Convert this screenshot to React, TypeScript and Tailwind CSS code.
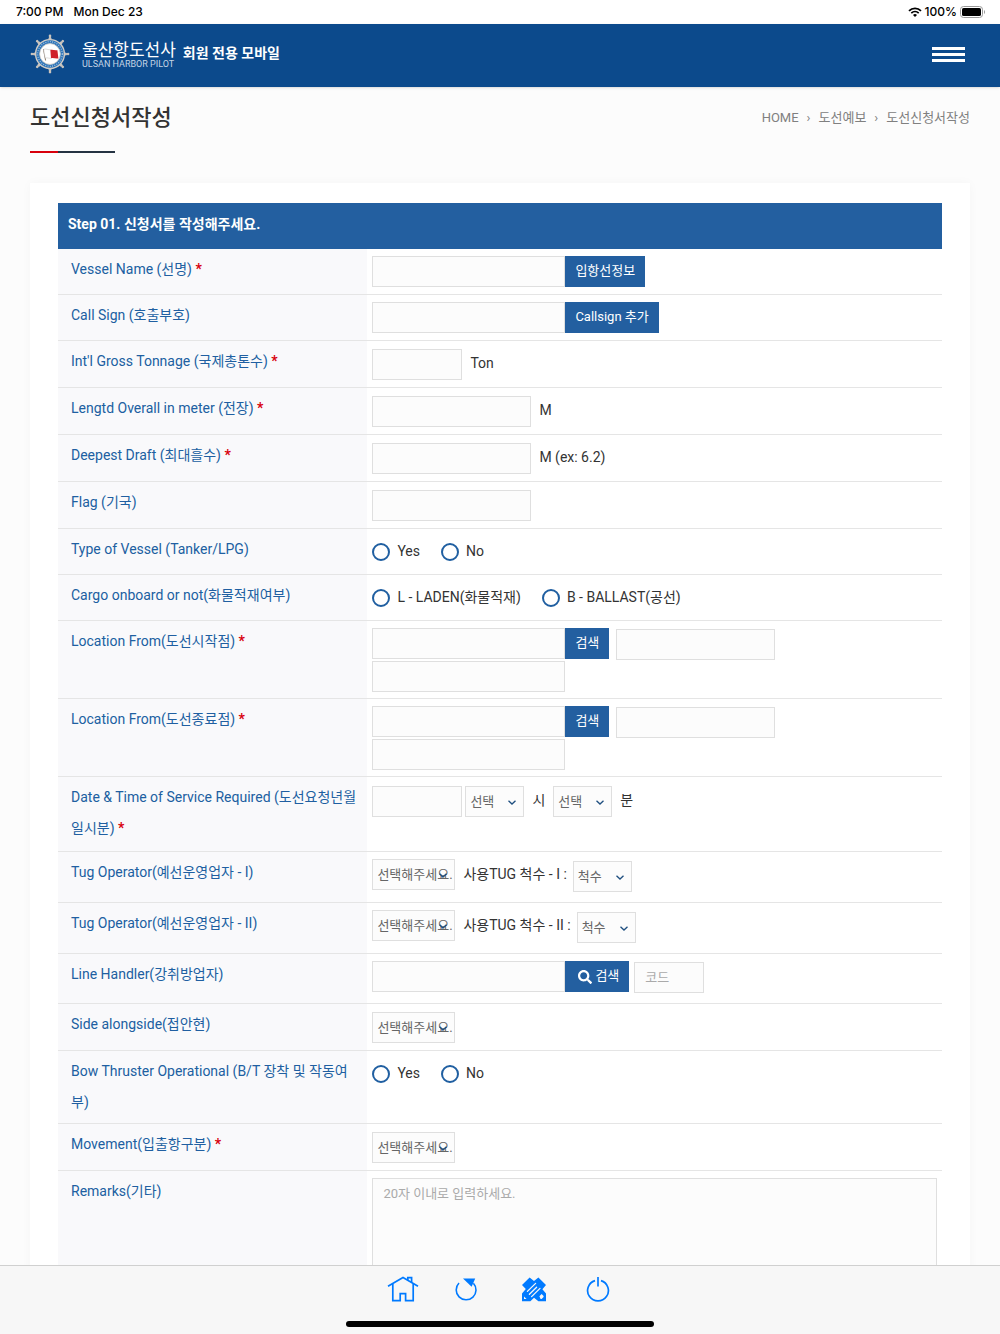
import React from "react"
import { FaSearch } from "react-icons/fa"

const inputStyle =
  "h-[31px] rounded-none border border-[#dfdfdf] bg-[#fcfcfc] px-2.5 text-[13px] text-[#333] placeholder:text-[#aaa] focus:outline-none"

const Row = ({
  label,
  id,
  required,
  children,
}: {
  label: string
  id: string
  required?: boolean
  children: React.ReactNode
}) => (
  <div className="grid grid-cols-[35%_1fr] border-b border-[#e5e5e5]">
    <div className="bg-[#f9f9fb] py-[5px] pl-[13px] pr-2 leading-[31px] text-[#205fa1]">
      <label htmlFor={id}>{label}</label>
      {required && <span className="font-bold text-[#d8000c]"> *</span>}
    </div>
    <div className="px-[5px]">{children}</div>
  </div>
)

const Field = ({
  id,
  label,
  width,
  placeholder,
}: {
  id: string
  label?: string
  width: string
  placeholder?: string
}) => (
  <input
    id={id}
    type="text"
    aria-label={label}
    placeholder={placeholder}
    className={`${inputStyle} ${width}`}
  />
)

const Select = ({
  id,
  label,
  text,
  width,
}: {
  id: string
  label?: string
  text: string
  width: string
}) => (
  <span className={`relative block h-[31px] shrink-0 ${width}`}>
    <select
      id={id}
      aria-label={label}
      className="block h-full w-full appearance-none rounded-none border border-[#dfdfdf] bg-[#fcfcfc] pt-[2px] pl-1 text-[13px] text-[#666]"
    >
      <option>{text}</option>
    </select>
    <svg
      viewBox="0 0 8 5"
      className="pointer-events-none absolute top-[14px] right-2 h-[5px] w-2"
      fill="none"
      stroke="#205080"
      strokeWidth="1.3"
    >
      <path d="M0.5 0.7 4 4 7.5 0.7" />
    </svg>
  </span>
)

const Radio = ({ name, id, text }: { name: string; id: string; text: string }) => (
  <label className="flex items-center gap-[7px] leading-[31px]">
    <input
      id={id}
      type="radio"
      name={name}
      className="size-[18px] appearance-none rounded-full border-2 border-[#205fa1] bg-white checked:border-[6px]"
    />
    {text}
  </label>
)

const Button = ({ children }: { children: React.ReactNode }) => (
  <button
    type="button"
    className="flex h-[31px] shrink-0 items-center gap-[3px] bg-[#235fa0] px-2.5 text-[13px] text-white"
  >
    {children}
  </button>
)

const Location = ({ id }: { id: string }) => (
  <div className="pt-[7px] pb-1.5">
    <div className="flex items-start">
      <Field id={id} width="w-[193px]" />
      <Button>검색</Button>
      <span className="mt-px ml-[7px] flex">
        <Field id={`${id}-name`} label="Location name" width="w-[159px]" />
      </span>
    </div>
    <div className="mt-px flex">
      <Field id={`${id}-detail`} label="Location detail" width="w-[193px]" />
    </div>
  </div>
)

const Tug = ({ id, text }: { id: string; text: string }) => (
  <div className="flex items-start pt-[7px] pb-2.5">
    <Select id={id} text="선택해주세요." width="w-[83px]" />
    <label htmlFor={`${id}-count`} className="mr-1.5 ml-2 leading-[31px]">
      {text}
    </label>
    <span className="mt-[2px]">
      <Select id={`${id}-count`} text="척수" width="w-[59px]" />
    </span>
  </div>
)

const spokes = [0, 45, 90, 135, 180, 225, 270, 315]

const Logo = () => (
  <svg viewBox="0 0 40 40" className="size-10" aria-hidden="true">
    {spokes.map((angle) => (
      <g key={angle} transform={`rotate(${angle} 20 20)`} fill="#c9c4be">
        <path d="M19.1 7V2.5h1.8V7z" />
        <circle cx="20" cy="1.9" r="1.3" />
        <circle cx="20" cy="4.6" r="1.5" />
      </g>
    ))}
    <circle cx="20" cy="20" r="14.4" fill="#2d74b8" stroke="#d0cbc5" strokeWidth="1.4" />
    <circle
      cx="20"
      cy="20"
      r="12.3"
      fill="none"
      stroke="#a9c6e2"
      strokeWidth="1.2"
      strokeDasharray="1 1.3"
    />
    <circle cx="20" cy="20" r="10.4" fill="#fff" stroke="#d0cbc5" strokeWidth="0.8" />
    <path d="M13.4 15 15.6 26.5" stroke="#8a7b6c" strokeWidth="1" />
    <path
      d="M13.6 15.4c2.5-1.3 4.5.9 7.4.3l.6 8.4c-2.4.8-4-.9-6.4 0z"
      fill="#fff"
      stroke="#bcb8b5"
      strokeWidth="0.5"
    />
    <path d="M20.4 16c2.4-.7 4.2.8 7 .2l1 8.2c-2.6.8-5-.9-7.4-.2z" fill="#cf2029" />
  </svg>
)

const StatusBar = () => (
  <div className="flex h-6 shrink-0 items-center justify-between bg-white pr-3.5 pl-4 font-['Inter',sans-serif] text-xs font-medium text-black">
    <div className="flex gap-2.5">
      <span>7:00 PM</span>
      <span>Mon Dec 23</span>
    </div>
    <div className="flex items-center gap-[3px]">
      <svg viewBox="0 0 14 10" className="h-2.5 w-3.5" fill="none" stroke="#000">
        <path d="M1 3.8a8.6 8.6 0 0 1 12 0" strokeWidth="1.8" />
        <path d="M3.3 6.1a5.4 5.4 0 0 1 7.4 0" strokeWidth="1.7" />
        <path d="M7 10 5 7.9a3 3 0 0 1 4 0z" fill="#000" stroke="none" />
      </svg>
      <span>100%</span>
      <svg viewBox="0 0 26 12" className="h-3 w-[26px]">
        <rect x="0.5" y="0.5" width="22" height="11" rx="3" fill="none" stroke="#999" />
        <rect x="2" y="2" width="19" height="8" rx="1.6" />
        <path d="M24 4v4c1.4-.6 1.4-3.4 0-4z" fill="#999" />
      </svg>
    </div>
  </div>
)

const BottomBar = () => (
  <nav className="flex h-[69px] shrink-0 flex-col items-center justify-between border-t border-[#d0d0d0] bg-[#f7f7f7] pt-2.5 pb-[7px] text-[#007aff]">
    <div className="flex h-7 items-center pr-[3px]">
      <button type="button" aria-label="Home" className="mr-[35px]">
        <svg viewBox="0 0 32 28" className="h-7 w-8" fill="none" stroke="currentColor" strokeWidth="1.7">
          <path d="M1 10.2 16 1.6l15 8.6" />
          <path d="M5.8 8v16.6h7.4v-7h5.4v7h7.6V8" />
          <path d="M20.8 4V1.6h3.8v4.6" />
        </svg>
      </button>
      <button type="button" aria-label="Reload" className="mr-[43px]">
        <svg viewBox="0 0 24 28" className="h-7 w-6" fill="none" stroke="currentColor" strokeWidth="1.6">
          <path d="M5 7A9.9 9.9 0 1 0 19.4 7.2" />
          <path d="M9 2.6H21.2L17.6 10.8z" fill="currentColor" stroke="none" />
        </svg>
      </button>
      <button type="button" aria-label="Write" className="mr-[39px]">
        <svg viewBox="0 0 26 28" className="h-7 w-[26px]">
          <path
            fill="currentColor"
            d="M1 9 8.6 1.6 13 5l4.4-3.4L25 9l-3.6 4.2L25 17.4v7.8h-7.6L13 21.8l-3.6 3.4H1v-7.8L4.8 13z"
          />
          <path
            d="M6.4 15.4 14.6 7.4M8.4 18.2l7.2-7M10.6 20.6 19 12.4"
            stroke="#f7f7f7"
            strokeWidth="1.3"
            strokeLinecap="round"
          />
          <path d="M3 20.4 5.6 23H3zM18.4 20.2l2.2-2.2 2 2v1l-2 2h-1z" fill="#f7f7f7" />
        </svg>
      </button>
      <button type="button" aria-label="Power">
        <svg viewBox="0 0 24 28" className="h-7 w-6" fill="none" stroke="currentColor" strokeWidth="1.7">
          <path d="M9 4.6a10.4 10.4 0 1 0 6 0" />
          <path d="M12 1v9.5" />
        </svg>
      </button>
    </div>
    <div className="h-1.5 w-[308px] rounded-full bg-black" />
  </nav>
)

const App = () => {
  return (
    <div className="flex h-screen flex-col bg-[#fcfcfc] font-['Roboto','Noto_Sans_CJK_KR',sans-serif] text-sm text-[#333]">
      <StatusBar />
      <header className="z-10 flex h-[63px] shrink-0 items-center justify-between bg-[#0c4a8c] pr-[35px] pb-[3px] pl-[30px] text-white shadow-sm">
        <a href="#" className="flex items-center">
          <Logo />
          <span className="ml-3 flex flex-col">
            <span className="text-[17px] leading-5">울산항도선사</span>
            <span className="text-[9px] leading-[9px] text-[#c5d5e6]">ULSAN HARBOR PILOT</span>
          </span>
          <span className="ml-[7px] pb-[2px] text-sm font-bold">회원 전용 모바일</span>
        </a>
        <button type="button" aria-label="Menu" className="flex w-[33px] flex-col gap-[3px]">
          <span className="h-[3px] bg-white" />
          <span className="h-[3px] bg-white" />
          <span className="h-[3px] bg-white" />
        </button>
      </header>

      <main className="min-h-0 flex-1 overflow-y-auto px-[30px] [scrollbar-width:none]">
        <div className="flex items-center justify-between pt-[15px]">
          <h1 className="text-[22px] leading-8 font-medium">도선신청서작성</h1>
          <div className="flex items-center gap-2 text-[13px] text-[#808080]">
            <a href="#">HOME</a>
            <span>›</span>
            <a href="#">도선예보</a>
            <span>›</span>
            <a href="#">도선신청서작성</a>
          </div>
        </div>
        <div className="mt-[17px] flex h-[2px] w-[85px]">
          <span className="w-1/3 bg-[#d8000c]" />
          <span className="flex-1 bg-[#253342]" />
        </div>

        <form className="mt-[30px] bg-white px-7 pt-5 pb-10 shadow-[0_0_10px_rgba(0,0,0,0.03)]">
          <h2 className="bg-[#235fa0] px-2.5 pb-1 leading-[42px] font-bold text-white">
            Step 01. 신청서를 작성해주세요.
          </h2>

          <Row label="Vessel Name (선명)" id="vessel" required>
            <div className="flex py-[7px]">
              <Field id="vessel" width="w-[193px]" />
              <Button>입항선정보</Button>
            </div>
          </Row>
          <Row label="Call Sign (호출부호)" id="callsign">
            <div className="flex py-[7px]">
              <Field id="callsign" width="w-[193px]" />
              <Button>Callsign 추가</Button>
            </div>
          </Row>
          <Row label="Int'l Gross Tonnage (국제총톤수)" id="tonnage" required>
            <div className="flex gap-2 pt-2 pb-[7px] leading-7">
              <Field id="tonnage" width="w-[90px]" />
              <span>Ton</span>
            </div>
          </Row>
          <Row label="Lengtd Overall in meter (전장)" id="length" required>
            <div className="flex gap-2 pt-2 pb-[7px] leading-7">
              <Field id="length" width="w-[159px]" />
              <span>M</span>
            </div>
          </Row>
          <Row label="Deepest Draft (최대흘수)" id="draft" required>
            <div className="flex gap-2 pt-2 pb-[7px] leading-7">
              <Field id="draft" width="w-[159px]" />
              <span>M (ex: 6.2)</span>
            </div>
          </Row>
          <Row label="Flag (기국)" id="flag">
            <div className="flex pt-2 pb-[7px]">
              <Field id="flag" width="w-[159px]" />
            </div>
          </Row>
          <Row label="Type of Vessel (Tanker/LPG)" id="type-yes">
            <div className="flex gap-[21px] py-[7px]">
              <Radio id="type-yes" name="type" text="Yes" />
              <Radio id="type-no" name="type" text="No" />
            </div>
          </Row>
          <Row label="Cargo onboard or not(화물적재여부)" id="cargo-l">
            <div className="flex gap-[21px] py-[7px]">
              <Radio id="cargo-l" name="cargo" text="L - LADEN(화물적재)" />
              <Radio id="cargo-b" name="cargo" text="B - BALLAST(공선)" />
            </div>
          </Row>
          <Row label="Location From(도선시작점)" id="from" required>
            <Location id="from" />
          </Row>
          <Row label="Location From(도선종료점)" id="to" required>
            <Location id="to" />
          </Row>
          <Row label="Date & Time of Service Required (도선요청년월일시분)" id="date" required>
            <div className="flex pt-[9px] pb-[34px]">
              <Field id="date" width="w-[90px]" />
              <span className="w-[3px]" />
              <Select id="hour" text="선택" width="w-[59px]" />
              <label htmlFor="hour" className="mx-2 leading-7">
                시
              </label>
              <Select id="minute" text="선택" width="w-[59px]" />
              <label htmlFor="minute" className="mx-2 leading-7">
                분
              </label>
            </div>
          </Row>
          <Row label="Tug Operator(예선운영업자 - I)" id="tug1">
            <Tug id="tug1" text="사용TUG 척수 - I :" />
          </Row>
          <Row label="Tug Operator(예선운영업자 - II)" id="tug2">
            <Tug id="tug2" text="사용TUG 척수 - II :" />
          </Row>
          <Row label="Line Handler(강취방업자)" id="line">
            <div className="flex items-start pt-[7px] pb-2.5">
              <Field id="line" width="w-[193px]" />
              <Button>
                <FaSearch size={14} className="ml-[3px]" />
                검색
              </Button>
              <span className="mt-px ml-[5px] flex">
                <Field id="code" label="Code" width="w-[70px]" placeholder="코드" />
              </span>
            </div>
          </Row>
          <Row label="Side alongside(접안현)" id="side">
            <div className="pt-2 pb-[7px]">
              <Select id="side" text="선택해주세요." width="w-[83px]" />
            </div>
          </Row>
          <Row label="Bow Thruster Operational (B/T 장착 및 작동여부)" id="bow-yes">
            <div className="flex gap-[21px] py-[7px]">
              <Radio id="bow-yes" name="bow" text="Yes" />
              <Radio id="bow-no" name="bow" text="No" />
            </div>
          </Row>
          <Row label="Movement(입출항구분)" id="movement" required>
            <div className="pt-2 pb-[7px]">
              <Select id="movement" text="선택해주세요." width="w-[83px]" />
            </div>
          </Row>
          <Row label="Remarks(기타)" id="remarks">
            <div className="py-[7px]">
              <textarea
                id="remarks"
                rows={6}
                placeholder="20자 이내로 입력하세요."
                className="block w-full resize-none border border-[#dfdfdf] bg-[#fcfcfc] px-2.5 py-1.5 text-[13px] placeholder:text-[#aaa] focus:outline-none"
              />
            </div>
          </Row>
        </form>
      </main>

      <BottomBar />
    </div>
  )
}

export default App
